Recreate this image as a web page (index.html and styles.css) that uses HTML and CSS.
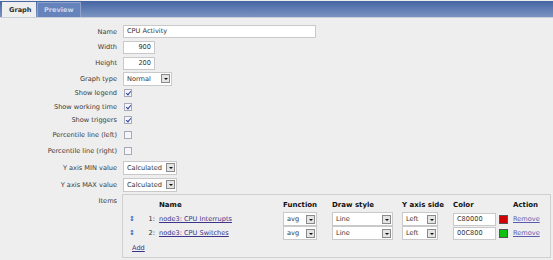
FILE: index.html
```html
<!DOCTYPE html>
<html>
	<head>
		<meta charset="utf-8">
		<title>Graph</title>
		<link rel="stylesheet" href="styles.css">
	</head>
	<body>
		<div class="tabs">
			<span class="tab current">Graph</span>
			<span class="tab">Preview</span>
		</div>

		<div class="form">
			<label class="r-name">Name</label>
			<div class="r-name"><span class="input wide">CPU Activity</span></div>

			<label class="r-num">Width</label>
			<div class="r-num"><span class="input num">900</span></div>

			<label class="r-num">Height</label>
			<div class="r-num"><span class="input num">200</span></div>

			<label>Graph type</label>
			<div><span class="select w-type">Normal<i class="btn"></i></span></div>

			<label class="r-chk">Show legend</label>
			<div class="r-chk"><span class="check on"></span></div>

			<label class="r-chk">Show working time</label>
			<div class="r-chk"><span class="check on"></span></div>

			<label class="r-chk">Show triggers</label>
			<div class="r-chk"><span class="check on"></span></div>

			<label class="r-chk">Percentile line (left)</label>
			<div class="r-chk"><span class="check"></span></div>

			<label class="r-chk">Percentile line (right)</label>
			<div class="r-chk"><span class="check"></span></div>

			<label>Y axis MIN value</label>
			<div><span class="select w-calc">Calculated<i class="btn"></i></span></div>

			<label>Y axis MAX value</label>
			<div><span class="select w-calc">Calculated<i class="btn"></i></span></div>

			<label class="items-label">Items</label>
			<div class="items">
				<div class="grid head">
					<span></span><span></span>
					<span>Name</span>
					<span>Function</span>
					<span>Draw style</span>
					<span>Y axis side</span>
					<span>Color</span>
					<span>Action</span>
				</div>
				<div class="grid row">
					<span class="handle">&#8597;</span>
					<span class="no">1:</span>
					<a href="#">node3: CPU Interrupts</a>
					<span class="select w-fn">avg<i class="btn"></i></span>
					<span class="select w-draw">Line<i class="btn"></i></span>
					<span class="select w-side">Left<i class="btn"></i></span>
					<span class="color"><span class="input clr">C80000</span><span class="swatch red"></span></span>
					<a href="#" class="remove">Remove</a>
				</div>
				<div class="grid row">
					<span class="handle">&#8597;</span>
					<span class="no">2:</span>
					<a href="#">node3: CPU Switches</a>
					<span class="select w-fn">avg<i class="btn"></i></span>
					<span class="select w-draw">Line<i class="btn"></i></span>
					<span class="select w-side">Left<i class="btn"></i></span>
					<span class="color"><span class="input clr">00C800</span><span class="swatch green"></span></span>
					<a href="#" class="remove">Remove</a>
				</div>
				<a href="#" class="add">Add</a>
			</div>
		</div>
	</body>
</html>
```

FILE: styles.css
```css
* {margin: 0; padding: 0; box-sizing: border-box;}

body {
	background: #eeeeee;
	font-family: "DejaVu Sans", Verdana, sans-serif;
	font-size: 6.6px;
	color: #333;
	width: 553px;
	height: 260px;
	overflow: hidden;
}

.tabs {
	margin-top: 1px;
	height: 17px;
	background: linear-gradient(#4565a3, #7b93c2);
	display: flex;
	align-items: flex-end;
	padding-left: 2px;
	gap: 1px;
	border-bottom: 1px solid #c9d0dc;
}

.tab {
	height: 15px;
	line-height: 14px;
	padding: 0 6px;
	font-weight: bold;
	color: #c9d6ee;
	background: #6683bb;
	border: 1px solid #8ea3cc;
	border-bottom: none;
}

.tab.current {
	background: #eeeeee;
	color: #333;
	border-color: #eeeeee;
	width: 34px;
}

.form {
	display: grid;
	grid-template-columns: 117px 1fr;
	grid-template-rows: 15px 16px 16px 15px 14px 13px 14px 15px 17px 17px 17px 1fr;
	column-gap: 6px;
	margin-top: 6px;
}

.form label {
	text-align: right;
	align-self: center;
	color: #3a3a3a;
}

.form > div {
	display: flex;
	align-items: center;
}

.form label.items-label {
	align-self: start;
	margin-top: 4px;
}

.input {
	display: inline-block;
	height: 13px;
	line-height: 11px;
	background: #fff;
	border: 1px solid #c9c9c9;
	padding: 0 3px;
	color: #333;
}

.input.wide {width: 193px;}
.input.num {width: 32px; text-align: right;}
.input.clr {width: 43px;}

.select {
	display: inline-flex;
	align-items: center;
	justify-content: space-between;
	height: 14px;
	background: #fff;
	border: 1px solid #c9c9c9;
	padding: 0 1px 0 3px;
}

.select .btn {
	width: 9px;
	height: 9px;
	border: 1px solid #8a8a8a;
	background: #e4e4e4;
	position: relative;
}

.select .btn::after {
	content: "";
	position: absolute;
	left: 2px;
	top: 3px;
	border-left: 2px solid transparent;
	border-right: 2px solid transparent;
	border-top: 2px solid #111;
}

.w-type {width: 49px;}
.w-calc {width: 54px;}
.w-fn {width: 34px;}
.w-draw {width: 61px;}
.w-side {width: 36px;}

.check {
	display: inline-block;
	width: 8px;
	height: 8px;
	margin-left: 1px;
	border: 1px solid #a7a9bb;
	background: #f6f6f8;
	position: relative;
}

.check.on::after {
	content: "";
	position: absolute;
	left: 2px;
	top: 0;
	width: 2px;
	height: 4px;
	border-right: 1px solid #2a3ea0;
	border-bottom: 1px solid #2a3ea0;
	transform: rotate(40deg);
}

.items {
	display: block !important;
	margin-left: -1px;
	width: 429px;
	height: 64px;
	border: 1px solid #cfcfcf;
	margin-top: 1px;
}

.grid {
	display: grid;
	grid-template-columns: 14px 20px 124px 49px 70px 51px 60px 35px;
	align-items: center;
	padding-left: 2px;
}

.head {
	height: 17px;
	font-weight: bold;
	font-size: 7px;
	color: #111;
	padding-top: 2px;
}

.row {height: 14px;}

.handle {
	color: #3a5bb8;
	font-weight: bold;
	text-align: center;
	font-size: 7px;
}

.no {
	text-align: right;
	padding-right: 4px;
}

a {
	color: #3c3488;
	text-decoration: underline;
}

.remove {color: #5a5ab0;}

.color {
	display: flex;
	align-items: center;
	gap: 3px;
}

.swatch {
	width: 9px;
	height: 9px;
	border: 1px solid #555;
}

.swatch.red {background: #d00000;}
.swatch.green {background: #10c010;}

.add {
	display: inline-block;
	margin: 4px 0 0 9px;
}
```
